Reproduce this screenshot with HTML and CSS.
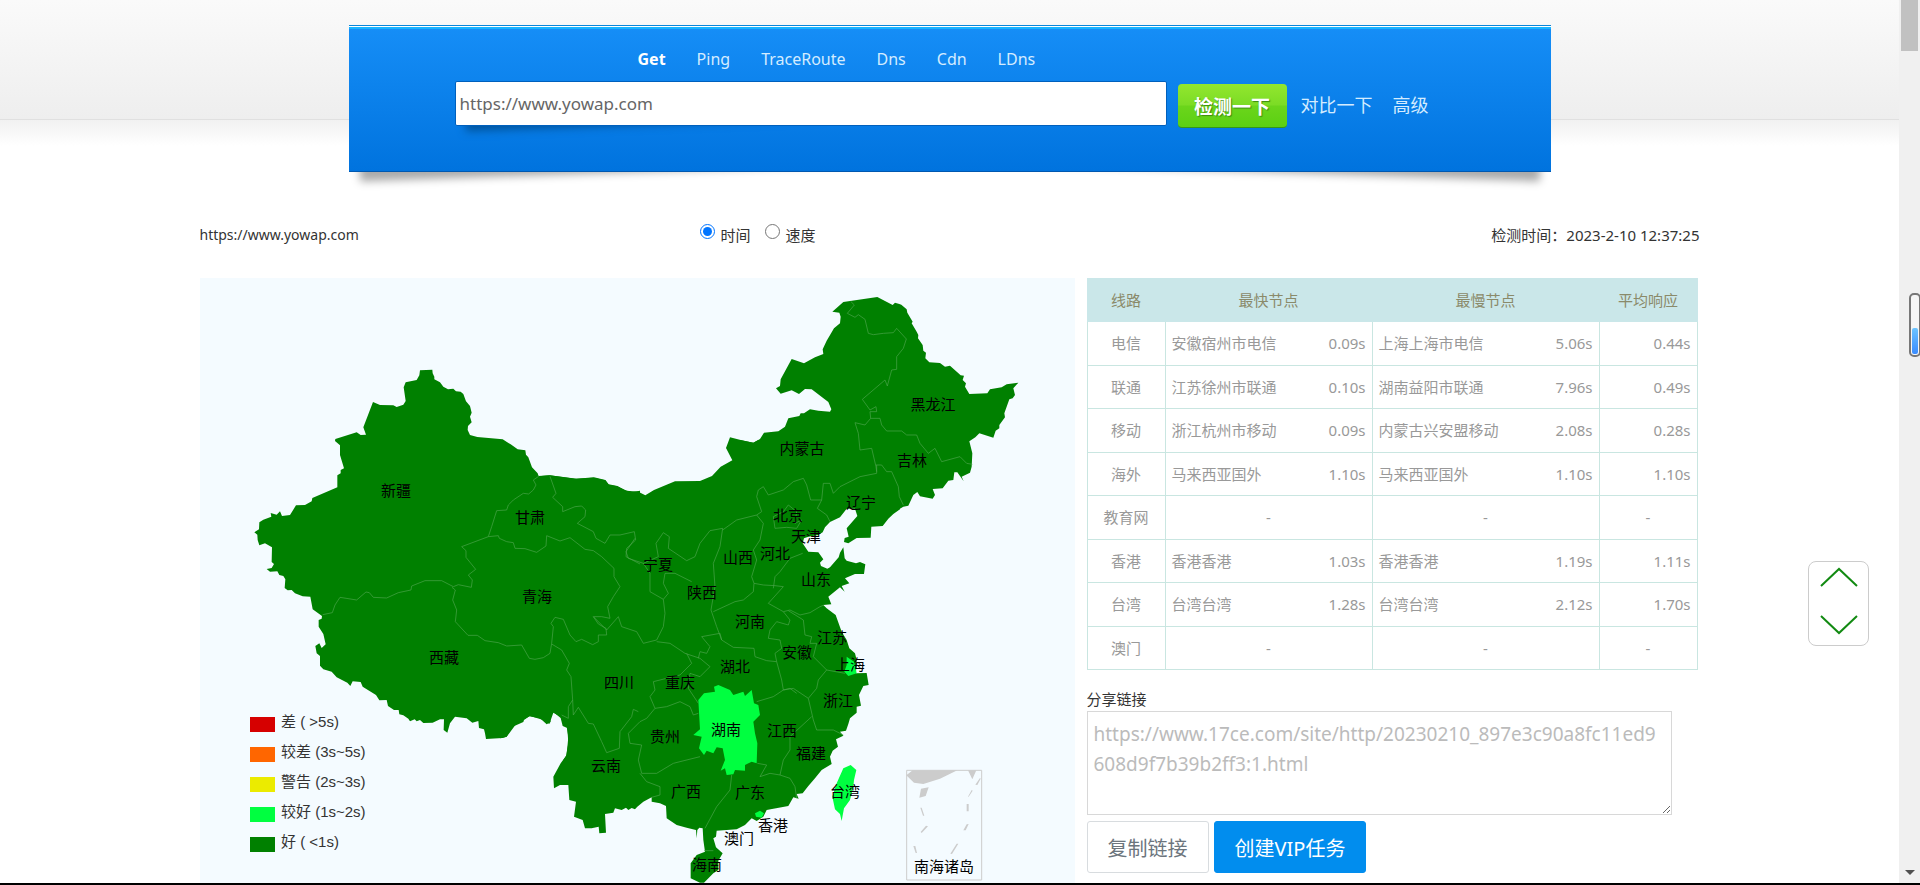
FILE: index.html
```html
<!DOCTYPE html>
<html lang="zh-CN">
<head>
<meta charset="utf-8">
<title>17CE 网站测速</title>
<link rel="stylesheet" href="styles.css">
</head>
<body>
<div class="screen">
<div class="page">
  <header class="top">
    <form class="banner">
      <nav class="modes">
        <a class="mode mode-active" href="#get">Get</a>
        <a class="mode" href="#ping">Ping</a>
        <a class="mode" href="#trace">TraceRoute</a>
        <a class="mode" href="#dns">Dns</a>
        <a class="mode" href="#cdn">Cdn</a>
        <a class="mode" href="#ldns">LDns</a>
      </nav>
      <div class="search">
        <div class="search-box"><input class="search-input" type="text" aria-label="网址" value="https://www.yowap.com"></div>
        <button class="go" type="button">检测一下</button>
        <a class="search-link" href="#compare">对比一下</a>
        <a class="search-link" href="#advanced">高级</a>
      </div>
    </form>
  </header>

  <main class="content">
    <div class="info">
      <span class="info-url">https://www.yowap.com</span>
      <div class="choices">
        <label class="choice"><input class="radio" type="radio" name="kind" checked>时间</label>
        <label class="choice"><input class="radio" type="radio" name="kind">速度</label>
      </div>
      <span class="info-date">检测时间：2023-2-10 12:37:25</span>
    </div>

    <div class="columns">
      <section class="map-panel">
        <svg class="map" viewBox="200 278 875 607" role="img" aria-label="全国响应时间">
          <g class="land" transform="translate(240 360) scale(.33333)">
            <path d="M540 31 577 29 578 40 583 50 583 58 600 67 610 80 624 88 640 86 648 94 662 95 670 102 678 124 690 138 695 158 690 170 695 187 684 198 683 210 690 225 712 231 788 238 812 253 833 268 856 271 858 284 865 292 876 322 893 340 896 349 930 346 1010 356 1062 352 1096 360 1106 373 1132 378 1155 391 1175 396 1200 392V1200H970L978 1188 985 1150 982 1104 968 1098 962 1074 940 1056 930 1070 932 1086 920 1093 900 1075 868 1069 852 1080 850 1086 818 1100 812 1108 800 1130 788 1134 738 1137 735 1120 732 1108 717 1104 715 1083 697 1088 680 1075 645 1070 630 1090 622 1118 611 1110 612 1078 600 1078 578 1088 550 1089 540 1080 530 1084 524 1078 510 1084 505 1076 490 1066 478 1063 476 1050 462 1050 444 1038 440 1020 418 1021 408 1005 368 980 362 966 338 964 331 978 322 968 290 952 275 935 250 928 240 917 240 888 230 880 226 858 238 850 245 864 257 853 250 822 236 800 236 780 245 776 246 768 218 748 211 710 188 709 165 700 155 690 143 691 134 684 136 658 130 648 118 645 112 634 90 635 80 627 95 624 102 612 95 606 96 562 75 550 58 556 53 540 52 524 43 517 57 508 58 487 70 479 94 470 92 459 110 464 120 454 126 468 150 465 168 436 195 435 215 424 217 414 292 382 292 346 302 340 302 330 312 325 300 285 300 256 285 243 286 237 350 217 362 225 378 224 370 202 399 126 420 135 460 136 470 141 490 134 497 123 491 82 497 67 530 60 538 46Z"/>
          </g>
          <g class="land" transform="translate(500 440) scale(.33333)">
            <path d="M0 40 116 108 148 106 225 116 280 113 316 121 326 134 352 139 380 152 415 155 436 166 462 150 525 124 600 123 636 108 662 80 697 61 678 24 687 0 690 -8 722 0 760 8 775 0H1200V208L1180 222 1165 236 1148 258 1114 260 1112 293 1070 294 1045 310 1032 306 1034 294 1046 290 1040 265 1072 228 1065 206 1040 206 1020 232 990 246 975 262 968 277 955 285 925 290 912 295 908 310 925 335 955 337 970 358 960 368 963 378 982 386 990 382 1016 352 1020 338 1030 322 1034 355 1040 362 1068 370 1080 366 1096 373 1092 402 1065 402 1035 415 1048 430 1025 438 1034 455 1020 442 985 470 994 493 970 495 980 505 1007 525 1025 575 1040 600 1048 625 1065 640 1070 660 1068 700 1100 699 1106 735 1090 738 1077 765 1083 797 1070 800 1070 818 1050 835 1045 852 1038 872 1020 875 1030 887 1008 898 1014 920 998 932 990 950 995 972 965 990 945 1015 925 1038 908 1060 890 1062 896 1076 880 1072 865 1098 820 1106 800 1110 790 1130 770 1143 755 1135 735 1155 710 1168 650 1172 648 1190 640 1195 648 1222 668 1240 655 1262 655 1290 640 1300 612 1328 600 1328 572 1315 572 1270 590 1245 615 1235 610 1200 608 1165 598 1163 592 1170 590 1195 588 1170 560 1163 530 1155 500 1135 498 1098 480 1090 455 1085 455 1072 430 1085 412 1100 405 1108 395 1104 385 1110 378 1103 365 1110 345 1105 340 1118 315 1122 318 1178 298 1180 296 1160 275 1165 255 1165 248 1140 222 1130 228 1085 208 1080 205 1035 180 1035 162 1045 160 1010 182 970 200 945 205 890 200 860 185 840 182 830 160 818 148 852 130 840 90 828 50 850 20 890 0 895Z"/>
          </g>
          <g class="land" transform="translate(740 280) scale(.33333)">
            <path d="M277 95 310 66 412 51 458 75 465 68 478 72 484 74 500 88 502 98 518 125 515 130 530 155 535 165 534 175 548 195 550 212 558 218 556 235 568 247 600 249 615 260 630 257 662 286 672 287 668 300 678 310 675 320 688 342 742 340 750 328 785 322 800 313 835 308 820 325 825 345 818 355 808 358 793 400 795 412 778 435 778 445 767 452 760 473 718 460 706 472 688 484 697 520 695 560 690 578 665 590 671 604 652 577 643 577 640 600 625 602 608 625 578 627 585 645 578 656 540 649 532 636 520 645 505 677 490 680 470 692 200 600H0V480L40 488 60 477 72 458 115 454 135 440 145 415 178 408 182 400 192 400 210 388 235 392 270 395 274 388 265 366 215 328 195 327 177 342 155 331 122 341 108 325 120 318 122 298 155 237 192 250 225 232 250 222 248 208 260 182 282 145 300 130 302 110 298 98Z"/>
          </g>
          <g class="good" transform="translate(500 440) scale(.33333)">
            <path d="M655 735 690 750 700 765 730 755 735 768 755 750 762 790 775 795 780 825 760 845 765 880 772 910 770 970 755 965 735 975 735 992 705 990 700 1003 680 1005 675 985 662 992 675 960 668 925 650 922 640 940 620 932 612 945 597 925 605 890 580 885 600 868 595 780 612 760 645 755 642 740Z"/>
            <path d="M1052 975 1069 990 1062 1020 1060 1040 1050 1080 1032 1105 1025 1143 1020 1122 1005 1108 997 1070 1010 1030 1030 985Z"/>
            <path d="M1040 650 1062 665 1070 700 1045 708 1033 695 1040 675Z"/>
            <path d="M765 1120 780 1112 792 1120 785 1133 768 1130Z"/>
          </g>
          <g class="border" transform="translate(240 360) scale(.33333)">
            <path d="M896 349 880 360 888 375 880 390 866 402 850 400 820 420 805 435 800 450 770 452 755 500 745 530 665 560 678 572 678 592 707 628 685 645 697 660 694 682 655 674 640 680 605 662 555 662 515 678 513 690 475 698 440 714 400 712 388 698 378 696 350 720 300 712 285 735 277 758 248 764"/>
            <path d="M636 682 646 690 638 720 650 750 646 785 684 826 712 826 735 842 775 848 800 858 845 855 868 895 885 898 910 893 930 880 935 850 940 800 933 790 945 772 970 778 990 825 1008 845 1025 838 1058 854 1075 845 1075 825 1100 825 1098 805 1075 792 1060 770 1085 770 1110 775 1103 740 1120 710 1140 680 1122 650 1122 625 1085 590 1060 572 1035 568 990 533 960 543 920 527 918 558 890 577 855 566 825 565 820 548 800 545 778 535 775 527 745 530"/>
            <path d="M930 349 948 400 938 412 968 440 968 455 1005 440 1025 438 1037 450 1035 470 1012 490 1060 515 1068 535 1095 550 1110 525 1140 525 1183 515 1187 540 1160 565 1158 590 1200 612"/>
            <path d="M935 852 965 870 988 910 980 930 993 950 998 1020 985 1040 985 1075 965 1065M998 1020 1000 1065 1015 1042 1045 1090 1060 1092 1085 1145 1100 1178 1138 1165 1140 1115 1175 1070 1180 1048 1195 1055"/>
          </g>
          <g class="border" transform="translate(500 440) scale(.33333)">
            <path d="M405 295 378 335 385 355 430 370 450 400 450 455 490 478 505 460 490 430 495 400 525 400 575 425M430 370 475 350 468 310 490 278 508 290 505 325 560 362 585 350 600 310 630 272 668 265 660 320 640 370 645 440 633 510M668 270 710 240 770 225 790 250 780 300 760 330 770 360 755 410 762 430 760 455 730 480 705 485 640 515"/>
            <path d="M770 225 785 215 770 170 775 150 790 140 805 165 850 150 880 125 910 115 920 135 932 180 965 180 970 130 990 130 1000 160 1020 140 1080 110 1130 100 1130 75M965 180 952 205 980 225 990 245M762 430 790 435 825 437 850 440 805 490 850 515M908 340 870 355 840 395 825 410 820 445"/>
            <path d="M825 265 820 230 850 215 865 195 890 215 885 250 905 240 890 265 860 262 825 265M850 515 870 510 900 525 930 518 960 500 972 495M633 510 650 560 665 600 700 622 762 625 765 650 800 662 830 665 825 640 845 625 840 600 805 595 810 570 830 545 865 555 870 540 850 515M865 512 910 540 915 585 935 590 930 610 950 610 940 650 980 690 1035 700"/>
            <path d="M830 665 845 720 850 750 880 745 925 775 950 745 955 720 980 690M605 590 660 580 665 600M605 590 630 620 620 640 600 635 595 655M490 478 495 520 490 560 470 600 430 610 410 575 365 560 355 530 320 570 280 530M470 605 510 610 555 640 600 655 630 680 600 710 570 700 565 745 595 790M560 640 575 670 540 705 460 725 465 750 450 770 465 805 500 800 540 785 570 800 580 825 595 820"/>
            <path d="M770 785 820 770 850 750 870 745 890 760M925 775 940 840 950 870 1000 870 1030 885M935 830 870 890 870 930 850 960 840 1005 810 1000 780 1010 800 975 772 970M420 845 385 880 390 910 425 915 415 960 425 1000 470 1000 520 970 600 950M420 845 440 835 465 805M420 1000 440 1025 480 1040 480 1065 455 1072M695 1005 690 1050 650 1100 615 1165M840 1005 870 1015 885 1040 890 1075M612 1232H640"/>
          </g>
          <g class="border" transform="translate(740 280) scale(.33333)">
            <path d="M332 64 343 75 322 100 345 112 355 104 375 118 385 160 400 164 430 160 460 158 470 145 499 177 490 205 470 230 470 268 455 270 442 318 435 300 367 358 390 390 408 380 410 395 390 395 392 415 420 415 425 435 440 453 485 453 500 465 530 465 540 490 565 520 585 505 605 545 660 530 680 550 697 553M392 415 375 435 345 428 355 460 360 510 395 505 408 560 410 575M408 555 425 555 440 575 455 575 475 620 478 650 490 675"/>
          </g>
          <g class="label">
            <text x="396" y="496">新疆</text><text x="530" y="523">甘肃</text><text x="537" y="602">青海</text>
            <text x="444" y="663">西藏</text><text x="619" y="688">四川</text><text x="658" y="570">宁夏</text>
            <text x="738" y="563">山西</text><text x="775" y="559">河北</text><text x="788" y="521">北京</text>
            <text x="806" y="542">天津</text><text x="861" y="508">辽宁</text><text x="802" y="454">内蒙古</text>
            <text x="933" y="410">黑龙江</text><text x="912" y="466">吉林</text><text x="816" y="585">山东</text>
            <text x="702" y="598">陕西</text><text x="750" y="627">河南</text><text x="832" y="643">江苏</text>
            <text x="797" y="658">安徽</text><text x="850" y="670">上海</text><text x="735" y="672">湖北</text>
            <text x="680" y="688">重庆</text><text x="838" y="706">浙江</text><text x="726" y="735">湖南</text>
            <text x="782" y="736">江西</text><text x="665" y="742">贵州</text><text x="811" y="759">福建</text>
            <text x="606" y="771">云南</text><text x="686" y="797">广西</text><text x="750" y="798">广东</text>
            <text x="845" y="797">台湾</text><text x="773" y="831">香港</text><text x="739" y="844">澳门</text>
            <text x="707" y="870">海南</text><text x="944" y="872">南海诸岛</text>
          </g>
          <g class="inset" transform="translate(740 560) scale(.33333)">
            <path class="inset-frame" d="M500 631H725V960H500Z"/>
            <path d="M499 646 518 631H652L600 656 550 672 522 668ZM684 631H709L697 658ZM543 686 566 682 557 708 538 713ZM706 674 720 654 722 656 712 675ZM684 710 695 690 698 692 686 710ZM680 732H686V754H680ZM541 743H545L553 767H549ZM542 816 558 797 564 799 545 819ZM670 811 680 793 686 792 677 811ZM520 858H526L531 879H527ZM631 881 650 851 655 851 636 882Z"/>
          </g>
          <g class="legend">
            <rect x="250" y="717" width="25" height="15" fill="#d60000"/><text x="281" y="727">差 ( &gt;5s)</text>
            <rect x="250" y="747" width="25" height="15" fill="#ff6600"/><text x="281" y="757">较差 (3s~5s)</text>
            <rect x="250" y="777" width="25" height="15" fill="#ebeb00"/><text x="281" y="787">警告 (2s~3s)</text>
            <rect x="250" y="807" width="25" height="15" fill="#00ff40"/><text x="281" y="817">较好 (1s~2s)</text>
            <rect x="250" y="837" width="25" height="15" fill="#008000"/><text x="281" y="847">好 ( &lt;1s)</text>
          </g>
        </svg>
      </section>

      <section class="side">
        <table class="results">
          <colgroup><col class="col-line"><col class="col-fast"><col class="col-slow"><col class="col-avg"></colgroup>
          <thead><tr><th>线路</th><th>最快节点</th><th>最慢节点</th><th>平均响应</th></tr></thead>
          <tbody>
            <tr><th>电信</th><td><div class="node"><span>安徽宿州市电信</span><span>0.09s</span></div></td><td><div class="node"><span>上海上海市电信</span><span>5.06s</span></div></td><td class="avg">0.44s</td></tr>
            <tr><th>联通</th><td><div class="node"><span>江苏徐州市联通</span><span>0.10s</span></div></td><td><div class="node"><span>湖南益阳市联通</span><span>7.96s</span></div></td><td class="avg">0.49s</td></tr>
            <tr><th>移动</th><td><div class="node"><span>浙江杭州市移动</span><span>0.09s</span></div></td><td><div class="node"><span>内蒙古兴安盟移动</span><span>2.08s</span></div></td><td class="avg">0.28s</td></tr>
            <tr><th>海外</th><td><div class="node"><span>马来西亚国外</span><span>1.10s</span></div></td><td><div class="node"><span>马来西亚国外</span><span>1.10s</span></div></td><td class="avg">1.10s</td></tr>
            <tr><th>教育网</th><td class="none">-</td><td class="none">-</td><td class="none">-</td></tr>
            <tr><th>香港</th><td><div class="node"><span>香港香港</span><span>1.03s</span></div></td><td><div class="node"><span>香港香港</span><span>1.19s</span></div></td><td class="avg">1.11s</td></tr>
            <tr><th>台湾</th><td><div class="node"><span>台湾台湾</span><span>1.28s</span></div></td><td><div class="node"><span>台湾台湾</span><span>2.12s</span></div></td><td class="avg">1.70s</td></tr>
            <tr><th>澳门</th><td class="none">-</td><td class="none">-</td><td class="none">-</td></tr>
          </tbody>
        </table>
        <label class="share-label" for="share">分享链接</label>
        <textarea class="share" id="share">https://www.17ce.com/site/http/20230210_897e3c90a8fc11ed9608d9f7b39b2ff3:1.html</textarea>
        <div class="actions">
          <button class="btn" type="button">复制链接</button>
          <button class="btn btn-primary" type="button">创建VIP任务</button>
        </div>
      </section>
    </div>
  </main>

  <div class="jump">
    <button class="jump-btn" type="button" aria-label="回到顶部"><svg width="40" height="20" viewBox="0 0 40 20"><path d="M2 19 20 2 38 19"/></svg></button>
    <button class="jump-btn" type="button" aria-label="到底部"><svg width="40" height="20" viewBox="0 0 40 20"><path d="M2 1 20 18 38 1"/></svg></button>
  </div>
</div>
<div class="scroll">
  <div class="thumb"></div>
  <div class="meter"><div class="meter-fill"></div></div>
  <svg class="scroll-down" width="10" height="5" viewBox="0 0 10 5"><path d="M0 0H10L5 5Z"/></svg>
</div>
</div>
</body>
</html>
```

FILE: styles.css
```css
* { box-sizing: border-box; }

body {
  margin: 0;
  background: #fff;
  color: #333;
  font: 15px/20px "Noto Sans", "Noto Sans CJK SC", sans-serif;
}

button, input, textarea { font-family: inherit; }

a { text-decoration: none; }

.screen {
  display: flex;
  height: 100vh;
  overflow: hidden;
  border-bottom: 2px solid #000;
}

.page {
  position: relative;
  isolation: isolate;
  flex: 1;
  min-width: 0;
  background:
    linear-gradient(#f1f1f1, #fff) 0 120px / 100% 26px no-repeat,
    linear-gradient(#fafafa, #eee) 0 0 / 100% 119px no-repeat,
    linear-gradient(#e0e0e0, #e0e0e0) 0 119px / 100% 1px no-repeat;
}

/* Banner */

.top { padding-top: 25px; }

.banner {
  position: relative;
  max-width: 1202px;
  height: 147px;
  margin: 0 auto;
  padding-top: 22px;
  border-top: 1px solid #0a86d8;
  border-bottom: 1px solid #0058b0;
  background:
    linear-gradient(#fff, #fff) 0 0 / 100% 1px no-repeat,
    linear-gradient(#17b4ff, #17b4ff) 0 1px / 100% 2px no-repeat,
    linear-gradient(#168ef7, #0073de);
}

.banner::before,
.banner::after,
.search-box::before {
  content: "";
  position: absolute;
  z-index: -1;
  bottom: 15px;
  left: 10px;
  width: 50%;
  height: 20%;
  box-shadow: 0 15px 8px #aaa;
  transform: rotate(-2deg);
}

.banner::after {
  left: auto;
  right: 10px;
  transform: rotate(2deg);
}

.modes {
  display: flex;
  gap: 31px;
  padding-left: 289px;
  font-size: 16px;
  line-height: 22px;
}

.mode { color: #d4ecff; }

.mode-active {
  color: #fff;
  font-weight: 700;
}

.search {
  display: flex;
  align-items: center;
  padding: 9px 0 0 106px;
}

.search-box {
  position: relative;
  isolation: isolate;
  width: 712px;
}

.search-box::before {
  bottom: 16px;
  height: 16px;
  box-shadow: 0 15px 8px #00549c;
}

.search-input {
  display: block;
  width: 100%;
  height: 45px;
  padding: 0 4px;
  border: 1px solid #0060bd;
  border-radius: 2px;
  background: #fff;
  color: #666;
  font-size: 17px;
}

.go {
  width: 109px;
  height: 44px;
  margin: 5px 14px 0 11px;
  padding: 0;
  border: 0;
  border-bottom: 1px solid #35961a;
  border-radius: 4px;
  background: linear-gradient(#93e72f, #7cdc25 48%, #6bd51b 52%, #5bd013);
  color: #fff;
  font-size: 19px;
  font-weight: 700;
  text-shadow: 1px 1px 1px #3d8a10;
}

.search-link {
  margin: 3px 20px 0 0;
  color: #d4ecff;
  font-size: 18px;
}

/* Result header */

.content {
  max-width: 1500px;
  margin: 0 auto;
  padding-top: 52px;
}

.info {
  display: grid;
  grid-template-columns: 500px 1fr auto;
  align-items: center;
  height: 20px;
}

.info-url { font-size: 14px; }

.choices {
  display: flex;
  gap: 14px;
}

.choice {
  display: flex;
  align-items: center;
  gap: 6px;
}

.radio {
  width: 15px;
  height: 15px;
  margin: 0 0 6px;
}

.columns {
  display: flex;
  align-items: flex-start;
  gap: 12px;
  padding-top: 34px;
}

/* Map */

.map-panel {
  flex: 0 1 875px;
  background: #f4fbff;
}

.map {
  display: block;
  width: 100%;
}

.land { fill: #008000; }
.good { fill: #00ff40; }

.border {
  fill: none;
  stroke: #4da64d;
  stroke-width: 2;
}

.label {
  fill: #000;
  font-size: 15px;
  text-anchor: middle;
}

.inset { fill: #ccc; }

.inset-frame {
  fill: none;
  stroke: #ccc;
  stroke-width: 3;
}

.legend {
  font-family: "Liberation Sans", "Noto Sans CJK SC", sans-serif;
  font-size: 15px;
}

.legend text { fill: #333; }

/* Results table */

.side { flex: 1; }

.results {
  width: 610px;
  height: 392px;
  border-collapse: collapse;
  table-layout: fixed;
  color: #999;
}

.col-line { width: 78px; }
.col-fast { width: 207px; }
.col-slow { width: 227px; }
.col-avg { width: 98px; }

.results tr { height: 43px; }

.results th {
  font-weight: 400;
  text-align: center;
}

.results th,
.results td {
  padding: 0 6px;
  border: 1px solid #c9e6e1;
}

.results thead th {
  border-color: #cae7e9;
  background: #cae7e9;
  color: #8a8a6a;
}

.node {
  display: flex;
  justify-content: space-between;
}

.results .avg { text-align: right; }
.results .none { text-align: center; }

.share-label {
  display: block;
  margin-top: 19px;
}

.share {
  display: block;
  width: 585px;
  height: 104px;
  margin-top: 2px;
  padding: 7px 6px;
  border: 1px solid #d8d8d8;
  color: #bbb;
  font-size: 19px;
  line-height: 30px;
  word-break: break-all;
}

.actions {
  display: flex;
  gap: 5px;
  margin-top: 6px;
}

.btn {
  height: 52px;
  padding: 0 20px;
  border: 1px solid #d8dcdf;
  border-radius: 3px;
  background: #fff;
  color: #6c757d;
  font-size: 20px;
}

.btn-primary {
  border-color: #018dee;
  background: #018dee;
  color: #fff;
}

/* Floating page controls */

.jump {
  position: absolute;
  top: 561px;
  right: 30px;
  display: flex;
  flex-direction: column;
  gap: 28px;
  width: 61px;
  height: 85px;
  padding: 5px 10px;
  border: 1px solid #ccc;
  border-radius: 8px;
  background: #fff;
}

.jump-btn {
  height: 20px;
  padding: 0;
  border: 0;
  background: none;
}

.jump-btn svg {
  display: block;
  fill: none;
  stroke: #128a12;
  stroke-width: 2;
}

/* Scroll gutter */

.scroll {
  position: relative;
  display: flex;
  flex-direction: column;
  justify-content: space-between;
  align-items: center;
  width: 21px;
  padding-bottom: 8px;
  background: #f0f0f0;
}

.thumb {
  width: 17px;
  height: 51px;
  background: #c1c1c1;
}

.meter {
  position: absolute;
  top: 293px;
  right: -1px;
  display: flex;
  align-items: flex-end;
  width: 12px;
  height: 64px;
  padding: 1px;
  border: 2px solid #777;
  border-radius: 5px;
  background: #f6f6f6;
}

.meter-fill {
  width: 100%;
  height: 26px;
  border-radius: 2px;
  background: linear-gradient(#6cc4ff, #3a8cff);
}

.scroll-down { fill: #505050; }
```
